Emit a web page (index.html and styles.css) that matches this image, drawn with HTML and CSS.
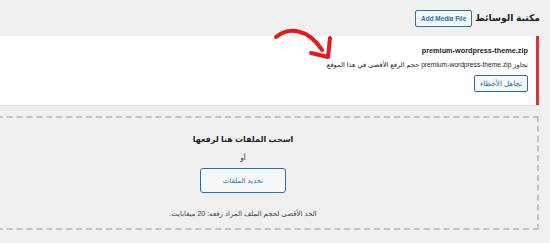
FILE: index.html
```html
<!DOCTYPE html>
<html lang="ar" dir="rtl">
<head>
<meta charset="utf-8">
<link rel="stylesheet" href="styles.css">
</head>
<body>
<div class="wrap">
  <div class="page-head">
    <h1 class="page-title">مكتبة الوسائط</h1>
    <a class="title-action">Add Media File</a>
  </div>
  <div class="notice">
    <strong class="filename">premium-wordpress-theme.zip</strong>
    <p class="msg">تجاوز premium-wordpress-theme.zip حجم الرفع الأقصى في هذا الموقع.</p>
    <button class="btn-small">تجاهل الأخطاء</button>
  </div>
  <div class="drop-area">
    <p class="drop-title">اسحب الملفات هنا لرفعها</p>
    <p class="drop-or">أو</p>
    <button class="btn-hero">تحديد الملفات</button>
    <p class="max-size">الحد الأقصى لحجم الملف المراد رفعه: 20 ميغابايت.</p>
  </div>
</div>
<svg class="arrow" width="70" height="40" viewBox="0 0 70 40">
  <path d="M6 12 C 18 2, 38 3, 52 25" fill="none" stroke="#e8171c" stroke-width="4" stroke-linecap="round"/>
  <path d="M60 13 L58 32 L41 28" fill="none" stroke="#e8171c" stroke-width="4" stroke-linecap="round" stroke-linejoin="round"/>
</svg>
</body>
</html>
```
FILE: styles.css
```css
html {
  overflow: hidden;
}
html, body {
  margin: 0;
  padding: 0;
}
body {
  background: #f0f0f1;
  width: 550px;
  height: 243px;
  overflow: hidden;
  font-family: "Liberation Sans", "DejaVu Sans", sans-serif;
  color: #1d2327;
  direction: rtl;
}
.wrap {
  width: 592px;
  margin-right: 11px;
  margin-left: -53px;
}
.page-head {
  display: flex;
  align-items: center;
  gap: 3px;
  height: 36px;
  margin-right: -1px;
}
.page-title {
  margin: 0;
  font-size: 9.2px;
  font-weight: bold;
  line-height: 16px;
  color: #1d2327;
}
.title-action {
  display: flex;
  align-items: center;
  height: 15px;
  padding: 0 5px;
  border: 1px solid #2271b1;
  border-radius: 2px;
  background: #f6f7f7;
  color: #2271b1;
  font-size: 6.4px;
  font-weight: bold;
  direction: ltr;
}
.notice {
  background: #fff;
  border-right: 3px solid #d63638;
  box-shadow: 0 1px 1px rgba(0,0,0,.06);
  padding: 10px 8px 13px;
  display: flex;
  flex-direction: column;
  align-items: flex-start;
}
.filename {
  display: block;
  font-size: 7.3px;
  line-height: 10px;
  font-weight: bold;
}
.msg {
  margin: 4px 0 0;
  font-size: 6.7px;
  line-height: 10px;
}
.btn-small {
  margin-top: 5px;
  height: 17px;
  padding: 0 5px;
  border: 1px solid #2271b1;
  border-radius: 2px;
  background: #f6f7f7;
  color: #2271b1;
  font-family: inherit;
  font-size: 7.2px;
}
.drop-area {
  margin-top: 11px;
  border: 2px dashed #c3c4c7;
  padding: 16px 0 9px;
  display: flex;
  flex-direction: column;
  align-items: center;
}
.drop-area p {
  margin: 0;
}
.drop-title {
  font-size: 8px;
  font-weight: bold;
  line-height: 12px;
}
.drop-or {
  margin-top: 7px !important;
  font-size: 6.8px;
  line-height: 10px;
}
.btn-hero {
  margin-top: 5px;
  width: 86px;
  height: 25px;
  border: 1px solid #2271b1;
  border-radius: 3px;
  background: #f6f7f7;
  color: #2271b1;
  font-family: inherit;
  font-size: 7px;
}
.max-size {
  margin-top: 16px !important;
  font-size: 7px;
  line-height: 10px;
  color: #3c434a;
}
.arrow {
  position: absolute;
  left: 270px;
  top: 25px;
}
```
